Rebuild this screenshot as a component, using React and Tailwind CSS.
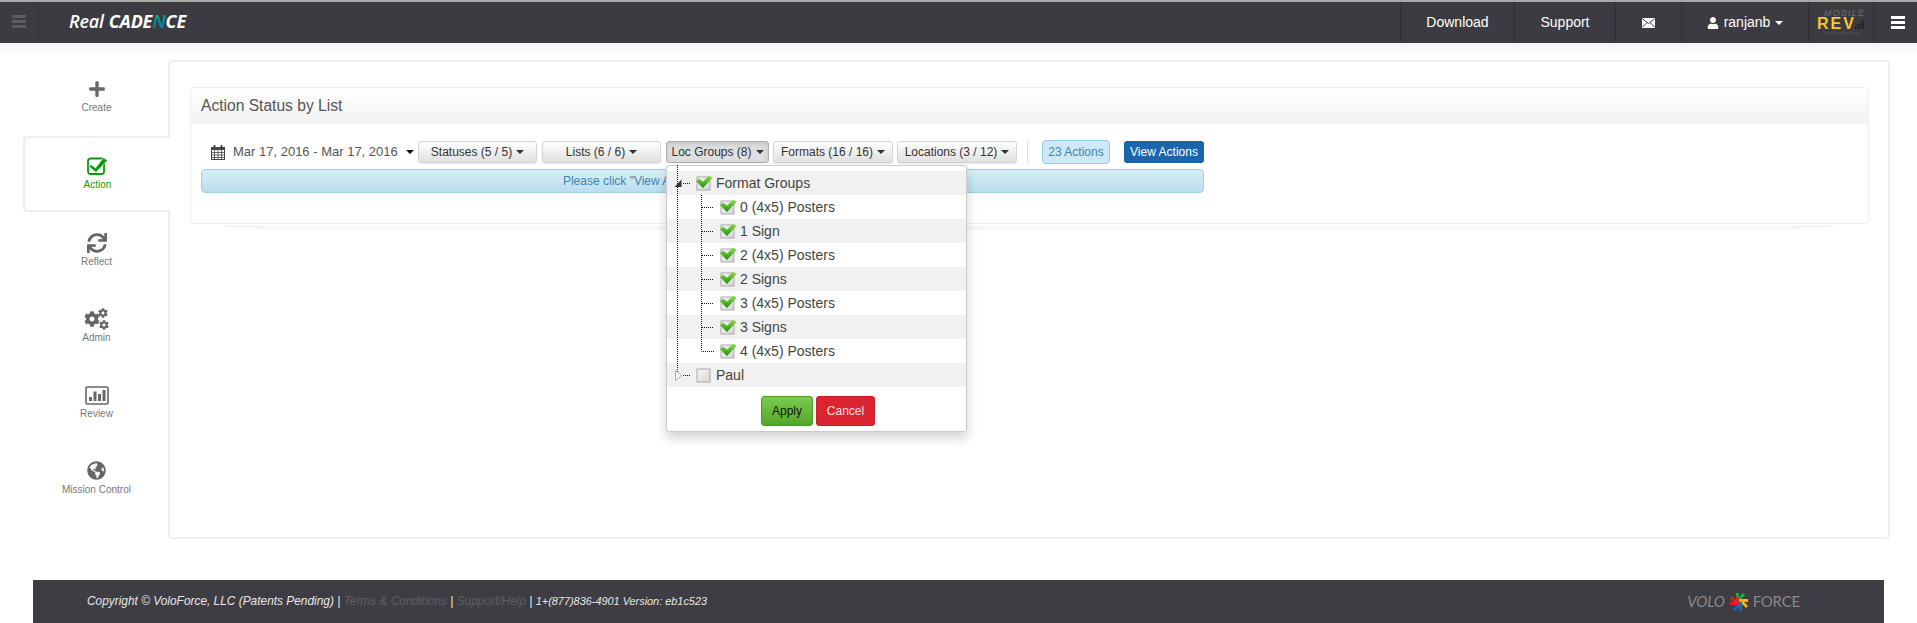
import React from 'react';
import { FaPlus, FaSync, FaCog, FaGlobeAmericas, FaUser } from 'react-icons/fa';

const Caret = ({ className = '' }) => (
  <span className={`inline-block w-0 h-0 border-x-4 border-x-transparent border-t-4 border-t-current ${className}`} />
);

const Bars = ({ color }) => (
  <div className="flex flex-col gap-[2px] w-[14px]">
    <div className={`h-[3px] ${color}`} />
    <div className={`h-[3px] ${color}`} />
    <div className={`h-[3px] ${color}`} />
  </div>
);

const ActionIcon = () => (
  <svg width="21" height="19" viewBox="0 0 21 19">
    <rect x="1" y="2.5" width="16" height="15.5" rx="2.5" fill="none" stroke="#0a9a0a" strokeWidth="1.8" />
    <path d="M4 8.5 L8.5 12 L16.5 1.5 L20.5 4.5 L9 16.5 L2 10.5 Z" fill="#0a9a0a" stroke="#fff" strokeWidth="0.7" />
  </svg>
);

const AdminIcon = () => (
  <div className="relative w-[25px] h-[22px]">
    <FaCog size={16} color="#666" className="absolute left-0 top-[3px]" />
    <FaCog size={10} color="#666" className="absolute right-[1px] top-0" />
    <FaCog size={10} color="#666" className="absolute right-0 bottom-0" />
  </div>
);

const ReviewIcon = () => (
  <svg width="24" height="19" viewBox="0 0 24 19">
    <rect x="1" y="1" width="22" height="17" rx="1.5" fill="none" stroke="#666" strokeWidth="1.6" />
    <rect x="4" y="11" width="3" height="4" fill="#666" />
    <rect x="8.5" y="5.5" width="3" height="9.5" fill="#666" />
    <rect x="13" y="8" width="3" height="7" fill="#666" />
    <rect x="17.5" y="4" width="3" height="11" fill="#666" />
  </svg>
);

const CalendarIcon = () => (
  <svg width="14" height="15" viewBox="0 0 14 15" className="shrink-0">
    <rect x="0.5" y="2.5" width="13" height="12" fill="none" stroke="#444" />
    <rect x="0.5" y="2" width="13" height="3" fill="#444" />
    <rect x="2.5" y="0" width="2" height="3.5" rx="0.8" fill="#444" />
    <rect x="9.5" y="0" width="2" height="3.5" rx="0.8" fill="#444" />
    <path d="M0 7.5H14M0 10H14M0 12.5H14M3.5 5V15M7 5V15M10.5 5V15" stroke="#444" strokeWidth="0.8" />
  </svg>
);

const EnvelopeIcon = () => (
  <svg width="13" height="10" viewBox="0 0 13 10">
    <rect width="13" height="10" fill="#fff" />
    <path d="M0.5 0.8 L6.5 5.6 L12.5 0.8 M0.5 9.2 L4.8 4.6 M12.5 9.2 L8.2 4.6" fill="none" stroke="#3c3b41" strokeWidth="1" />
  </svg>
);

const TreeCheck = ({ checked }) => (
  <svg width="16" height="16" viewBox="0 0 16 16" className="shrink-0 overflow-visible">
    <defs>
      <linearGradient id="boxFill" x1="0" y1="0" x2="1" y2="1">
        <stop offset="0" stopColor="#f8f8f8" />
        <stop offset="1" stopColor="#d4d4d4" />
      </linearGradient>
      <linearGradient id="tickFill" x1="0" y1="0" x2="0" y2="1">
        <stop offset="0" stopColor="#9ae23f" />
        <stop offset="1" stopColor="#168c16" />
      </linearGradient>
    </defs>
    <rect x="1" y="2" width="13" height="13" fill="url(#boxFill)" stroke="#aaa" />
    {checked && <path d="M0 6 L3 3.5 L7 6.8 L13 0.5 L16.5 2.8 L7 13 Z" fill="url(#tickFill)" />}
  </svg>
);

const navItems = [
  { label: 'Create', icon: <FaPlus size={18} color="#666" />, box: 'pt-[19px] text-[#777]', gap: 'mt-[2px]' },
  { label: 'Action', icon: <ActionIcon />, box: 'pt-[17px] border-2 border-r-0 border-[#eee] rounded-l-[4px] bg-white text-[#0a9a0a]', gap: 'mt-[3px]' },
  { label: 'Reflect', icon: <FaSync size={20} color="#666" />, box: 'pt-[21px] text-[#777]', gap: 'mt-[2px]' },
  { label: 'Admin', icon: <AdminIcon />, box: 'pt-[21px] text-[#777]', gap: 'mt-[2px]' },
  { label: 'Review', icon: <ReviewIcon />, box: 'pt-[21px] text-[#777]', gap: 'mt-[2px]' },
  { label: 'Mission Control', icon: <FaGlobeAmericas size={19} color="#666" />, box: 'pt-[20px] text-[#777]', gap: 'mt-[3px]' },
];

const treeRows = [
  { label: 'Format Groups', checked: true, top: true },
  { label: '0 (4x5) Posters', checked: true },
  { label: '1 Sign', checked: true },
  { label: '2 (4x5) Posters', checked: true },
  { label: '2 Signs', checked: true },
  { label: '3 (4x5) Posters', checked: true },
  { label: '3 Signs', checked: true },
  { label: '4 (4x5) Posters', checked: true },
  { label: 'Paul', checked: false, top: true },
];

const ToolButton = ({ width, active, children }) => (
  <button
    className={`${width} h-[22px] flex items-center justify-center gap-[4px] rounded-[3px] border text-[12px] text-[#333] ${
      active
        ? 'bg-[#dedede] border-[#adadad] shadow-[inset_0_2px_4px_rgba(0,0,0,0.12)]'
        : 'bg-gradient-to-b from-white to-[#e0e0e0] border-[#d4d4d4] shadow-[0_1px_1px_rgba(0,0,0,0.08)]'
    }`}
  >
    {children}
    <Caret />
  </button>
);

const LocGroupsMenu = () => (
  <div className="absolute left-0 top-[24px] z-20 w-[301px] h-[267px] bg-white rounded-[3px] border border-[#ccc] shadow-[0_6px_12px_rgba(0,0,0,0.18)] pt-[5px]">
    <div className="relative">
      {treeRows.map((row, i) => (
        <div
          key={row.label}
          className={`h-[24px] flex items-center text-[14px] text-[#444] ${i % 2 === 0 ? 'bg-[#f1f1f1]' : 'bg-white'} ${
            row.top ? 'pl-[29px]' : 'pl-[53px]'
          }`}
        >
          <TreeCheck checked={row.checked} />
          <span className="ml-[4px]">{row.label}</span>
        </div>
      ))}
      {/* tree connectors */}
      <svg width="60" height="216" className="absolute left-0 top-0 overflow-visible" fill="none" stroke="#111" strokeDasharray="1 1">
        <path d="M10.5 -6V204" />
        <path d="M34.5 24V180.5H47" />
        <path d="M16 12.5H24M16 204.5H24" />
        <path d="M35 36.5H47M35 60.5H47M35 84.5H47M35 108.5H47M35 132.5H47M35 156.5H47" />
        <path d="M7.5 16 L14.5 16 L14.5 8.5 Z" fill="#333" stroke="none" />
        <path d="M8.5 199.5 L14.5 204.5 L8.5 209.5 Z" fill="#fff" stroke="#aaa" strokeDasharray="none" />
      </svg>
    </div>
    <div className="flex justify-center gap-[3px] mt-[9px] pl-[3px]">
      <button className="w-[52px] h-[30px] rounded-[3px] border border-[#4c9a25] bg-gradient-to-b from-[#7acb4e] to-[#53a728] text-[12px] text-[#111]">
        Apply
      </button>
      <button className="w-[59px] h-[30px] rounded-[3px] border border-[#c81e2a] bg-[#da2430] text-[12px] text-[#f6e3e3]">
        Cancel
      </button>
    </div>
  </div>
);

const VoloStar = () => (
  <svg width="22" height="22" viewBox="0 0 22 22" className="mx-[3px]" fill="none" strokeWidth="2.8">
    <path d="M9.5 2V9.5H16M9.5 9.5L16 3" stroke="#2aa84a" />
    <path d="M9.5 2V9.5H16M9.5 9.5L16 3" stroke="#f5b50f" transform="rotate(90 11 11)" />
    <path d="M9.5 2V9.5H16M9.5 9.5L16 3" stroke="#1c65c0" transform="rotate(180 11 11)" />
    <path d="M9.5 2V9.5H16M9.5 9.5L16 3" stroke="#e0202e" transform="rotate(270 11 11)" />
  </svg>
);

const MobileRevLogo = () => (
  <div className="w-[52px] flex flex-col leading-none">
    <span className="pl-[9px] text-[9px] italic tracking-[1.2px] text-[#6d6d6d] leading-[8px] whitespace-nowrap">MOBILE</span>
    <div className="flex items-end h-[13px] pl-[2px]">
      <span className="text-[16px] font-bold text-[#f5c832] leading-[13px] tracking-[2px]">REV</span>
      <svg width="11" height="12" viewBox="0 0 11 12" className="-ml-[2px]">
        <path d="M1 11V8H2.5V11ZM3.5 11V6H5V11ZM6 11V4H7.5V11ZM8.5 11V2H10V11Z" fill="#222" />
      </svg>
    </div>
    <span className="text-[4px] text-[#59585c] leading-[6px] pl-[9px] whitespace-nowrap">Your Branding Here</span>
  </div>
);

export default function App() {
  return (
    <div className="w-[1917px] h-[623px] overflow-hidden bg-white text-[#333]" style={{ fontFamily: '"Liberation Sans", Arial, sans-serif' }}>
      {/* top bar */}
      <header className="h-[43px] border-t-2 border-[#a8a8a8] bg-[#3c3b41] flex items-stretch text-white text-[14px]">
        <div className="w-[39px] flex items-center justify-center border-r border-[#343338] pb-[3px]">
          <Bars color="bg-[#5d5c62]" />
        </div>
        <div className="ml-[30px] flex items-center pb-[3px] italic font-bold text-[18px] tracking-[-0.2px] whitespace-nowrap" style={{ fontFamily: '"Open Sans", sans-serif' }}>
          <span className="font-semibold mr-[5px]">Real</span>
          <span>
            CADE
            <span className="bg-gradient-to-b from-[#27b04a] to-[#1b5fc0] bg-clip-text text-transparent">N</span>
            CE
          </span>
        </div>
        <div className="ml-auto flex items-stretch">
          <div className="w-[114px] flex items-center justify-center border-l border-[#2f2e33]">Download</div>
          <div className="w-[101px] flex items-center justify-center border-l border-[#2f2e33]">Support</div>
          <div className="w-[66px] flex items-center justify-center border-l border-[#2f2e33]">
            <EnvelopeIcon />
          </div>
          <div className="w-[127px] flex items-center justify-center gap-[5px] border-l border-[#2f2e33]">
            <FaUser size={12} />
            <span>ranjanb</span>
            <Caret />
          </div>
          <div className="w-[65px] flex items-center justify-center border-l border-[#2f2e33]">
            <MobileRevLogo />
          </div>
          <div className="w-[44px] flex items-center justify-center border-l border-[#2f2e33] pl-[5px]">
            <Bars color="bg-white" />
          </div>
        </div>
      </header>
      <div className="h-[9px] bg-gradient-to-b from-[#f6f6f6] to-[#fbfbfb] shadow-[0_1px_2px_rgba(0,0,0,0.03)]" />

      {/* body */}
      <div className="flex pl-[23px] pr-[27px] pt-[8px] h-[487px]">
        <nav className="w-[147px] -mr-[2px] relative z-10 shrink-0">
          {navItems.map((item) => (
            <div key={item.label} className={`h-[76px] flex flex-col items-center ${item.box}`}>
              <div className="h-[20px] flex items-center justify-center">{item.icon}</div>
              <div className={`${item.gap} text-[10px] leading-[14px]`}>{item.label}</div>
            </div>
          ))}
        </nav>

        <main className="flex-1 h-[479px] border-2 border-[#eee] rounded-[4px] pt-[25px] pl-[20px] pr-[19px]">
          <section className="h-[137px] border border-[#eee] rounded-[4px]">
            <div className="h-[36px] flex items-center pl-[10px] pt-[1px] text-[15.6px] text-[#555] bg-gradient-to-b from-white to-[#f2f2f2] border-b border-[#eee] rounded-t-[4px]">
              Action Status by List
            </div>
            <div className="pl-[10px] pt-[16px]">
              <div className="flex items-center h-[24px]">
                <div className="w-[217px] flex items-center pl-[10px] text-[#555]">
                  <CalendarIcon />
                  <span className="ml-[8px] whitespace-nowrap text-[13px]">Mar 17, 2016 - Mar 17, 2016</span>
                  <Caret className="ml-[8px] text-[#111]" />
                </div>
                <ToolButton width="w-[119px]">Statuses (5 / 5)</ToolButton>
                <div className="ml-[5px]">
                  <ToolButton width="w-[119px]">Lists (6 / 6)</ToolButton>
                </div>
                <div className="ml-[5px] relative">
                  <ToolButton width="w-[103px]" active>Loc Groups (8)</ToolButton>
                  <LocGroupsMenu />
                </div>
                <div className="ml-[4px]">
                  <ToolButton width="w-[120px]">Formats (16 / 16)</ToolButton>
                </div>
                <div className="ml-[4px]">
                  <ToolButton width="w-[120px]">Locations (3 / 12)</ToolButton>
                </div>
                <div className="ml-[10px] w-px h-[22px] bg-[#ddd]" />
                <div className="ml-[14px] w-[68px] h-[24px] flex items-center justify-center rounded-[4px] border border-[#9acfea] bg-[#cfe8f5] text-[12px] text-[#3a87ad]">
                  23 Actions
                </div>
                <button className="ml-[14px] w-[80px] h-[22px] rounded-[3px] bg-[#1a65ab] text-[12px] text-white">
                  View Actions
                </button>
              </div>
              <div className="mt-[5px] w-[1003px] h-[24px] flex items-center justify-center rounded-[4px] border border-[#9acfea] bg-gradient-to-b from-[#d9edf7] to-[#b9def0] text-[12px] text-[#3a87ad]">
                Please click "View Actions" to view the selected lists.
              </div>
            </div>
          </section>
          <div className="ml-[34px] mr-[36px] h-[3px] border border-t-0 border-[#eee] rounded-b-[3px]" />
          <div className="ml-[68px] mr-[69px] h-[2px] border-b border-x border-[#eee]" />
        </main>
      </div>

      {/* footer */}
      <footer className="mt-[41px] mx-[33px] w-[1851px] h-[43px] bg-[#3e3d43] flex items-center pl-[54px] pr-[84px] text-[11.9px] italic text-[#e8e8e8]">
        <span>
          Copyright © VoloForce, LLC (Patents Pending) | <span className="text-[#5e5d62]">Terms &amp; Conditions</span> | <span className="text-[#5e5d62]">Support/Help</span> | <span className="text-[10.9px]">1+(877)836-4901 Version: eb1c523</span>
        </span>
        <div className="ml-auto flex items-center not-italic text-[#88888a] text-[15px] tracking-[-0.2px]" style={{ fontFamily: '"Lato", sans-serif' }}>
          <span className="italic">VOLO</span>
          <VoloStar />
          <span>FORCE</span>
        </div>
      </footer>
    </div>
  );
}
